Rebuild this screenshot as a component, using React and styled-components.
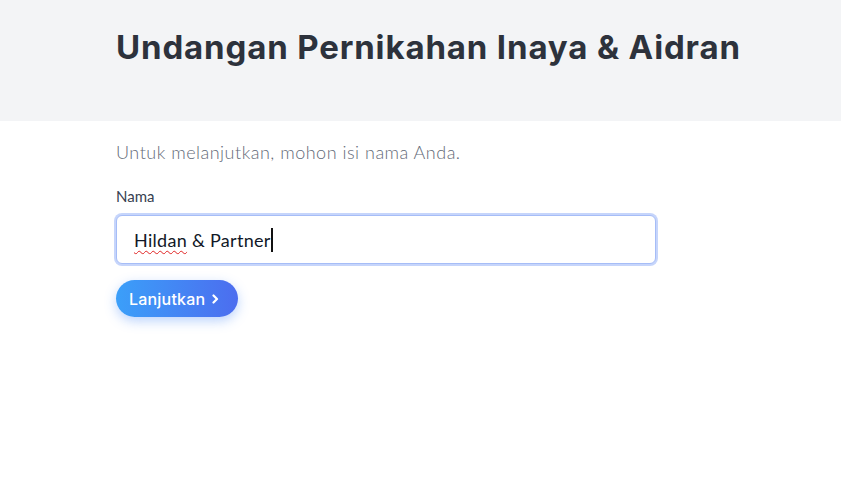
import React from "react";
import styled, { createGlobalStyle } from "styled-components";

const Global = createGlobalStyle`
  html, body { margin: 0; padding: 0; background: #ffffff; }
  body { font-family: "Lato", "Noto Sans", sans-serif; }
  * { box-sizing: border-box; }
`;

const Page = styled.div`
  width: 841px;
  min-height: 477px;
  background: #ffffff;
`;

const Header = styled.header`
  height: 121px;
  background: #f3f4f6;
  padding: 27px 0 0 116px;
`;

const Title = styled.h1`
  margin: 0;
  font-family: "Inter", sans-serif;
  font-weight: 700;
  font-size: 33px;
  line-height: 40px;
  letter-spacing: 0.85px;
  color: #2d323c;
`;

const Main = styled.main`
  padding: 18px 0 0 116px;
  display: flex;
  flex-direction: column;
`;

const Lead = styled.p`
  margin: 0;
  font-family: "Lato", sans-serif;
  font-weight: 300;
  font-size: 18px;
  line-height: 26px;
  letter-spacing: 0.5px;
  color: #636a78;
`;

const Label = styled.label`
  margin-top: 21px;
  font-family: "Lato", sans-serif;
  font-size: 15px;
  line-height: 20px;
  color: #374151;
`;

const Field = styled.div`
  margin-top: 9px;
  width: 540px;
  height: 49px;
  border: 1px solid #a6bdf7;
  border-radius: 6px;
  box-shadow: 0 0 0 2px #c6d5fb;
  background: #fff;
  display: flex;
  align-items: center;
  padding: 0 17px;
  font-family: "Lato", sans-serif;
  font-size: 18px;
  letter-spacing: 0.3px;
  color: #111827;
`;

const Misspelled = styled.span`
  text-decoration: underline wavy #e02424;
  text-decoration-thickness: 1px;
  text-underline-offset: 3px;
`;

const Caret = styled.span`
  display: inline-block;
  width: 2px;
  height: 24px;
  background: #111;
`;

const Button = styled.button`
  margin-top: 16px;
  align-self: flex-start;
  height: 37px;
  padding: 0 18px 0 13px;
  border: none;
  border-radius: 999px;
  background: linear-gradient(90deg, #3b9ff9 0%, #4c6def 100%);
  box-shadow: 0 4px 12px rgba(59, 130, 246, 0.35);
  color: #fff;
  display: flex;
  align-items: center;
  gap: 6px;
  font-family: "Inter", sans-serif;
  font-weight: 500;
  font-size: 16px;
  letter-spacing: 0.2px;
  cursor: pointer;
`;

export default function App() {
  return (
    <Page>
      <Global />
      <Header>
        <Title>Undangan Pernikahan Inaya &amp; Aidran</Title>
      </Header>
      <Main>
        <Lead>Untuk melanjutkan, mohon isi nama Anda.</Lead>
        <Label>Nama</Label>
        <Field role="textbox">
          <Misspelled>Hildan</Misspelled>&nbsp;&amp; Partner
          <Caret />
        </Field>
        <Button>
          Lanjutkan
          <svg width="9" height="10" viewBox="0 0 9 10" fill="none">
            <path d="M2.5 1.5L6 5L2.5 8.5" stroke="#fff" strokeWidth="2.2" strokeLinecap="round" strokeLinejoin="round" />
          </svg>
        </Button>
      </Main>
    </Page>
  );
}
